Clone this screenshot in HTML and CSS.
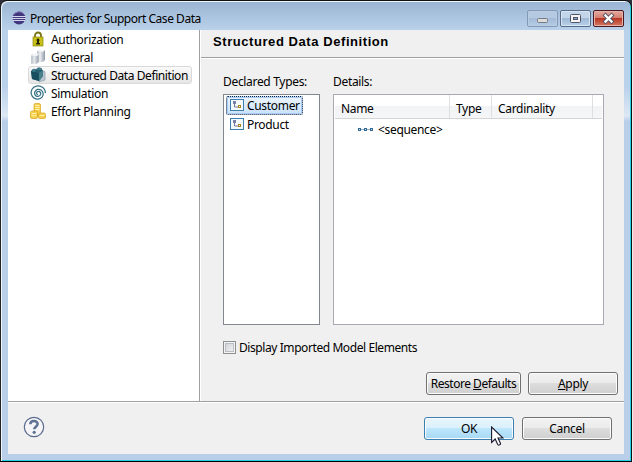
FILE: index.html
```
<!DOCTYPE html>
<html lang="en">
<head>
<meta charset="utf-8">
<title>Properties for Support Case Data</title>
<link rel="stylesheet" href="styles.css">
</head>
<body>
<div class="desktop">
<div class="window">
  <header class="titlebar">
    <svg class="app-icon" width="14" height="14" viewBox="0 0 14 14"><circle cx="7" cy="7" r="6.5" fill="#40377c"/><path d="M1 4Q7-2 12 3" fill="none" stroke="#8a79b7"/><path d="M0 5.5h14M0 7.5h14M1 9.5h12" stroke="#d5d6ed" stroke-width="1"/></svg>
    <span class="window-title">Properties for Support Case Data</span>
    <div class="controls">
      <span class="control min"><svg width="29" height="15"><rect x="9.5" y="7.5" width="10" height="4" rx="1" fill="#ddd" stroke="#777b82"/></svg></span>
      <span class="control max"><svg width="29" height="15"><rect x="9.5" y="3.5" width="10" height="8" rx="1" fill="#f4f4f4" stroke="#50546a"/><rect x="12.5" y="6.5" width="4" height="2" fill="#8eacd0" stroke="#50546a"/></svg></span>
      <span class="control close"><svg width="29" height="15"><path d="M11.500 4.500l6 6M17.500 4.500l-6 6" stroke="#555465" stroke-width="4.200" stroke-linecap="square"/><path d="M11.500 4.500l6 6M17.500 4.500l-6 6" stroke="#fff" stroke-width="2.300" stroke-linecap="square"/></svg></span>
    </div>
  </header>
  <main class="client">
    <div class="upper">
      <nav class="tree">
        <div class="tree-item"><svg width="16" height="16" viewBox="0 0 16 16"><path d="M5 7V4.500a3 3 0 016 0V7" fill="none" stroke="#777316" stroke-width="1.800"/><rect x="3" y="6" width="10" height="9" fill="#c6c018" stroke="#8d8710" stroke-width=".7"/><path d="M8 7.500a1.600 1.600 0 011 2.700V12h1v1.500H6V12h1v-1.800a1.600 1.600 0 011-2.700z" fill="#252600"/></svg><span>Authorization</span></div>
        <div class="tree-item"><svg width="16" height="16" viewBox="0 0 16 16"><defs><linearGradient id="steel"><stop offset="0" stop-color="#a9b1bb"/><stop offset=".4" stop-color="#e9ecf0"/><stop offset="1" stop-color="#8f9aa7"/></linearGradient></defs><g fill="url(#steel)"><path d="M7 2l2-1h6v10l-2 2H7z"/><path d="M7 2.500l2-1.500h6l-2 2z" fill="#f2f3f5"/><path d="M1 6l2-1.500h6V13l-2 2H1z" stroke="#fff" stroke-width=".5"/><path d="M1 6.500l2-1.500h6L7 7z" fill="#f5f6f8"/></g></svg><span>General</span></div>
        <div class="tree-item selected"><svg width="16" height="16" viewBox="0 0 16 16"><path d="M8 6l6-2 1 1v8l-6 2z" fill="#b8c5d1" stroke="#8293a4" stroke-width=".6"/><path d="M1 4l6-2 6 1v6l-4 5-7-2z" fill="#286474"/><path d="M1 4l8 2v8l-7-2z" fill="#174e60"/><path d="M9 6l4-3v6l-4 5z" fill="#477f8b"/><path d="M2 3l2-1 2 1v2H2zM7 1.500L9 .7l2.500.8v2H7z" fill="#3e8292" stroke="#174e60" stroke-width=".6"/></svg><span class="tight">Structured Data Definition</span></div>
        <div class="tree-item"><svg width="16" height="16" viewBox="0 0 16 16" fill="none" stroke="#327083" stroke-width="1.250"><path d="M8 9.500A1.500 1.500 0 018 6.500C10 6.300 11 7.800 10.700 9.200 10.200 11 8.500 11.700 7 11.300 4.800 10.700 4.200 8.500 4.900 6.800 6 4.300 9 3.700 11 5c2.600 1.700 2.800 5 1 7.200-2 2.300-5.500 2.500-8 .7C1 10.800.4 7 2 4.200 4 .8 8.500.2 11.500 1.800c2.400 1.200 3.800 3.500 3.900 6.200"/></svg><span>Simulation</span></div>
        <div class="tree-item"><svg width="16" height="16" viewBox="0 0 16 16"><g fill="#f5ce4c" stroke="#d9a318" stroke-width=".7"><rect x="4" y=".5" width="6.500" height="12" rx="1.500"/><rect x=".5" y="8" width="7" height="7.500" rx="1.500"/><rect x="8.500" y="10" width="7" height="5.500" rx="1.500"/></g><path d="M5 2.500h4.500M5 4.500h4.500M5 6.500h4.500M1.500 10.500h5M1.500 12.700h5M9.500 12.500h5" stroke="#fff1a7"/></svg><span>Effort Planning</span></div>
      </nav>
      <section class="page">
        <h1 class="page-title"><span>Structured Data Definition</span></h1>
        <div class="editor">
          <div class="types">
            <label>Declared Types:</label>
            <div class="type-list">
              <div class="type-item active"><svg width="14" height="12"><rect x=".5" y=".5" width="13" height="11" fill="#f5faff" stroke="#3c7fb1"/><path d="M4.500 3v5H9" fill="none" stroke="#727b9b"/><rect x="3" y="2" width="3" height="3" fill="#7781a7"/><rect x="8.500" y="6.500" width="2" height="2" fill="#fff" stroke="#a5851c"/></svg><span>Customer</span></div>
              <div class="type-item"><svg width="14" height="12"><rect x=".5" y=".5" width="13" height="11" fill="#f5faff" stroke="#3c7fb1"/><path d="M4.500 3v5H9" fill="none" stroke="#727b9b"/><rect x="3" y="2" width="3" height="3" fill="#7781a7"/><rect x="8.500" y="6.500" width="2" height="2" fill="#fff" stroke="#a5851c"/></svg><span>Product</span></div>
            </div>
          </div>
          <div class="details">
            <label>Details:</label>
            <div class="table">
              <div class="table-head"><span>Name</span><span>Type</span><span>Cardinality</span><span></span></div>
              <div class="table-row"><svg width="15" height="5"><path d="M0 2.500h15" stroke="#8fb0c8"/><g fill="#b8d8ee" stroke="#356b95"><rect x=".5" y="1.500" width="2" height="2"/><rect x="6.500" y="1.500" width="2" height="2"/><rect x="12.500" y="1.500" width="2" height="2"/></g></svg><span>&lt;sequence&gt;</span></div>
            </div>
          </div>
        </div>
        <div class="check"><span class="checkbox"></span><span class="tight">Display Imported Model Elements</span></div>
        <div class="page-actions"><button class="restore">Restore <u>D</u>efaults</button><button><u>A</u>pply</button></div>
      </section>
    </div>
    <footer class="footer">
      <svg class="help" width="22" height="22" viewBox="0 0 22 22"><circle cx="11" cy="11" r="9.700" fill="#f5f5f7" stroke="#5b6c8f" stroke-width="1.200"/><path d="M7.300 8.300C7.300 3.900 14.700 4 14.600 8c0 2.500-3.400 2.800-3.400 5.200" fill="none" stroke="#5f7195" stroke-width="2.500"/><circle cx="11.200" cy="16.300" r="1.600" fill="#5f7195"/></svg>
      <div class="dialog-actions"><button class="ok">OK</button><button>Cancel</button></div>
    </footer>
  </main>
</div>
<aside class="backdrop"></aside>
</div>
<svg class="cursor" width="13" height="20" viewBox="0 0 13 20"><path d="M.6 1v15.500l3.600-3.500 2.500 5.500c.8 1.200 3.300.2 2.700-1.300L7 12h5z" fill="#fff" stroke="#17172a" stroke-width="1.100"/></svg>
</body>
</html>
```
FILE: styles.css
```
* { box-sizing: border-box; }
body { margin: 0; width: 633px; height: 462px; overflow: hidden; font: 12px/18px "Noto Sans", sans-serif; letter-spacing: -.32px; color: #000; }
svg { display: block; flex: none; }
span, label { white-space: nowrap; }
.tight { letter-spacing: -.42px; }
.desktop { display: flex; width: 633px; height: 462px; background: #30303a; }
.window { width: 632px; height: 462px; flex: none; padding: 0 6px 6px; border: 1px solid #111; border-left-color: #222; border-bottom-color: #000; border-radius: 7px 7px 0 0; background: linear-gradient(#9ab4d2, #b9d1ea 29px, #b9d1ea 85px, #dce8f5 115px, #b9cfe9 120px); box-shadow: inset 1px 1px #eef6ff, inset -1px -1px #24d0e6; }
.backdrop { flex: 1; background: #ededed; }
.titlebar { height: 29px; display: flex; align-items: flex-start; padding-left: 5px; }
.app-icon { margin-top: 10px; }
.window-title { margin: 9px 0 0 4px; letter-spacing: -.47px; }
.controls { display: flex; gap: 2px; margin: 9px 1px 0 auto; }
.control { width: 31px; height: 17px; border: 1px solid #586b86; border-radius: 2px; background: linear-gradient(#c3d5e8 45%, #9fb9d5 50%, #b9d2eb); box-shadow: inset 0 0 0 1px #d8e5f3; }
.min { border-color: #8499b5; box-shadow: inset 0 0 0 1px #b9cde2; background: linear-gradient(#b5cae1 45%, #a3bbd7 50%, #b6cde7); }
.close { border-color: #4d1720; background: linear-gradient(#e5aa9f, #d48072 45%, #b83523 50%, #d57a63); box-shadow: inset 0 0 0 1px #e3b3aa; }
.client { margin-left: 1px; width: 616px; height: 424px; background: #f0f0f0; }
.upper { height: 372px; display: flex; border-bottom: 1px solid #a0a0a0; box-shadow: 0 1px #fff; }
.tree { width: 192px; background: #fff; border-right: 1px solid #a0a0a0; }
.tree-item { height: 18px; display: flex; align-items: center; gap: 5px; margin-left: 20px; padding-left: 2px; width: 164px; }
.tree-item span { padding-top: 1px; }
.tree-item.selected { border: 1px solid #d9d9d9; border-radius: 3px; padding-left: 1px; background: linear-gradient(#fafafa, #e6e6e6); }
.page { flex: 1; border-left: 1px solid #fff; }
.page-title { height: 28px; margin: 0; padding: 3px 0 0 12px; border-bottom: 1px solid #a0a0a0; box-shadow: 0 1px #fff; font: bold 13px/18px "Liberation Sans", sans-serif; letter-spacing: .57px; }
.editor { display: flex; gap: 13px; padding: 15px 20px 0 22px; }
.types { width: 97px; }
.details { width: 271px; }
label { display: block; height: 21px; }
.type-list, .table { height: 231px; background: #fff; border: 1px solid #828790; }
.table { border-color: #a9a9b4; }
.type-list { padding: 1px 2px; }
.type-item { display: flex; align-items: center; gap: 3px; height: 19px; width: 77px; padding-left: 4px; }
.type-item svg { margin-bottom: 2px; }
.active { padding-left: 3px; border: 1px dotted #102040; border-radius: 2px; background: linear-gradient(#edf5fd, #c9e1fc); outline: 1px solid #a9cdf2; outline-offset: -2px; }
.table-head { display: grid; grid-template-columns: 115px 42px 101px 1fr; grid-template-rows: 23px; height: 24px; margin: 0 1px; border-bottom: 1px solid #d5d5d5; background: linear-gradient(#fff 45%, #f2f3f5 50%, #f5f6f8); line-height: 27px; }
.table-head span { height: 23px; padding-left: 6px; border-right: 1px solid #dedfe1; }
.table-head span:last-child { border: 0; }
.table-row { display: flex; align-items: center; gap: 5px; height: 20px; padding: 1px 0 0 24px; }
.check { display: flex; align-items: center; height: 18px; margin: 14px 0 0 22px; gap: 3px; }
.checkbox { width: 13px; height: 13px; margin-bottom: 1px; border: 1px solid #8e8f8f; background: linear-gradient(135deg, #cbcfd5, #f6f6f6); box-shadow: inset 0 0 0 1px #f4f4f4, inset 0 0 0 2px #b9bec4; }
.page-actions { display: flex; justify-content: flex-end; gap: 7px; margin: 15px 6px 0 0; }
button { width: 90px; height: 23px; padding: 0; border: 1px solid #707070; border-radius: 3px; background: linear-gradient(#f2f2f2, #ebebeb 49%, #dddddd 50%, #cfcfcf); box-shadow: inset 0 0 0 1px #fcfcfc; font: 12px/18px "Noto Sans", sans-serif; letter-spacing: -.32px; color: #000; }
.restore { width: 95px; letter-spacing: -.48px; }
u { text-underline-offset: 1px; }
.footer { display: flex; justify-content: space-between; padding: 15px 12px 0 15px; }
.help { margin-top: -1px; }
.dialog-actions { display: flex; gap: 8px; }
.ok { border-color: #3c7fb1; background: linear-gradient(#eaf6fd, #d9f0fc 49%, #bee6fd 50%, #a7d9f5); }
.cursor { position: absolute; left: 491px; top: 426px; }
```
